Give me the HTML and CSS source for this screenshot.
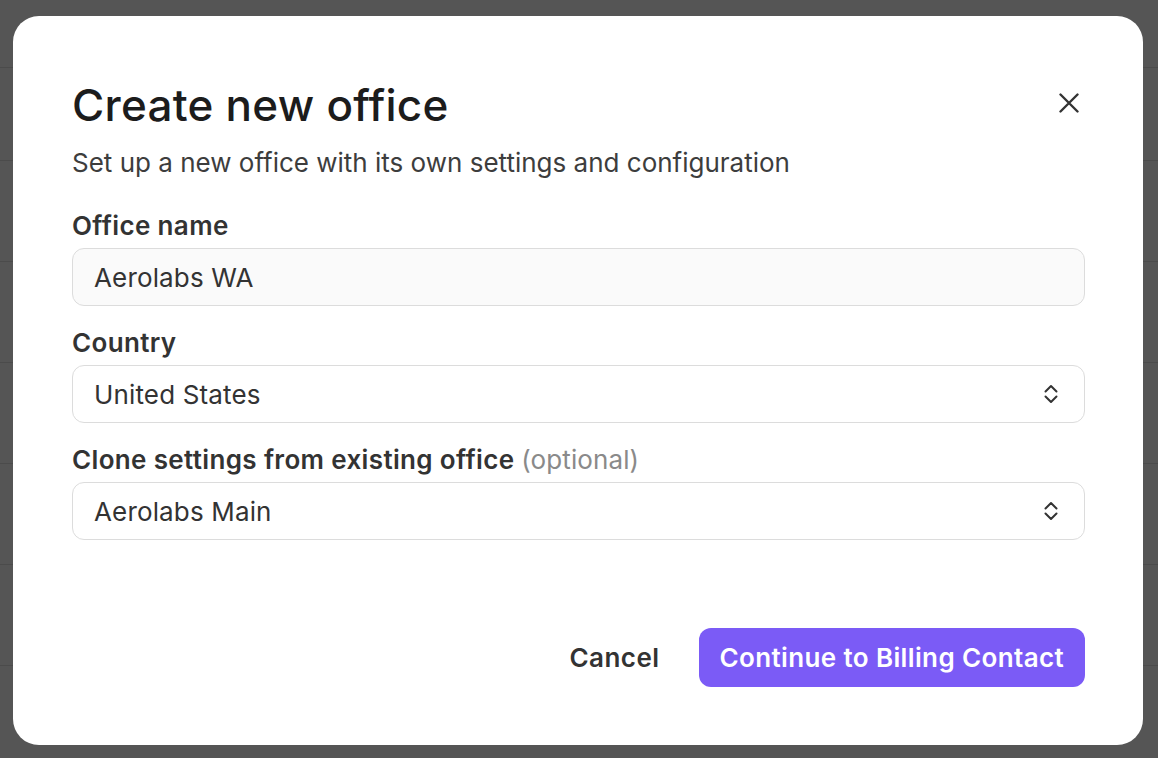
FILE: index.html
```html
<!DOCTYPE html>
<html lang="en">
<head>
<meta charset="utf-8">
<title>Create new office</title>
<link rel="stylesheet" href="styles.css">
</head>
<body>
<div class="backdrop">
  <div class="row r1"></div>
  <div class="row r2"></div>
  <div class="row"></div>
  <div class="row"></div>
  <div class="row"></div>
  <div class="row"></div>
  <div class="row"></div>
</div>
<div class="modal" role="dialog" aria-labelledby="title">
  <div class="header">
    <h1 id="title" class="title">Create new office</h1>
    <button class="close" aria-label="Close">
      <svg width="20" height="20" viewBox="0 0 20 20" fill="none" stroke="#333" stroke-width="2.4" stroke-linecap="round">
        <path d="M1.5 1.5 L18.5 18.5 M18.5 1.5 L1.5 18.5"/>
      </svg>
    </button>
  </div>
  <p class="subtitle">Set up a new office with its own settings and configuration</p>

  <div class="fields">
    <div class="field">
      <label class="label">Office name</label>
      <div class="input filled">Aerolabs WA</div>
    </div>
    <div class="field">
      <label class="label">Country</label>
      <div class="input select">
        <span>United States</span>
        <svg class="chev" width="14" height="20" viewBox="0 0 14 20" fill="none" stroke="#333" stroke-width="2" stroke-linecap="round" stroke-linejoin="round">
          <path d="M1.5 7.5 L7 2 L12.5 7.5 M1.5 12.5 L7 18 L12.5 12.5"/>
        </svg>
      </div>
    </div>
    <div class="field">
      <label class="label">Clone settings from existing office <span class="opt">(optional)</span></label>
      <div class="input select">
        <span>Aerolabs Main</span>
        <svg class="chev" width="14" height="20" viewBox="0 0 14 20" fill="none" stroke="#333" stroke-width="2" stroke-linecap="round" stroke-linejoin="round">
          <path d="M1.5 7.5 L7 2 L12.5 7.5 M1.5 12.5 L7 18 L12.5 12.5"/>
        </svg>
      </div>
    </div>
  </div>

  <div class="actions">
    <button class="btn-cancel">Cancel</button>
    <button class="btn-primary">Continue to Billing Contact</button>
  </div>
</div>
</body>
</html>
```
FILE: styles.css
```css
* { box-sizing: border-box; }
html, body {
  margin: 0;
  padding: 0;
  width: 1158px;
  height: 758px;
  overflow: hidden;
  background: #555555;
  font-family: Inter, "Noto Sans", "Liberation Sans", sans-serif;
}
.backdrop {
  display: flex;
  flex-direction: column;
}
.row {
  height: 101px;
  border-bottom: 1px solid #4b4b4b;
  flex-shrink: 0;
}
.r1 { height: 68px; }
.r2 { height: 93px; }

.modal {
  position: absolute;
  left: 13px;
  top: 16px;
  width: 1130px;
  height: 729px;
  background: #ffffff;
  border-radius: 26px;
  padding: 63px 58px 58px 59px;
  display: flex;
  flex-direction: column;
}
.header {
  display: flex;
  justify-content: space-between;
  align-items: center;
}
.title {
  margin: 0;
  font-size: 44px;
  line-height: 52px;
  font-weight: 500;
  color: #1c1c1c;
  letter-spacing: 0.25px;
}
.close {
  border: 0;
  background: none;
  padding: 0;
  margin-right: 6px;
  margin-top: -4px;
  width: 20px;
  height: 20px;
  display: flex;
  cursor: pointer;
}
.subtitle {
  margin: 16px 0 0 0;
  font-size: 26px;
  line-height: 32px;
  color: #3d3d3d;
  letter-spacing: 0;
}
.fields {
  margin-top: 31px;
  display: flex;
  flex-direction: column;
  gap: 21px;
}
.field {
  display: flex;
  flex-direction: column;
  gap: 6px;
}
.label {
  font-size: 26px;
  line-height: 32px;
  font-weight: 600;
  color: #333333;
  letter-spacing: 0.35px;
}
.opt {
  font-weight: 400;
  color: #8a8a8a;
  letter-spacing: 0.1px;
}
.input {
  height: 58px;
  border: 1px solid #dcdcdc;
  border-radius: 12px;
  background: #ffffff;
  padding: 2px 26px 0 21px;
  display: flex;
  align-items: center;
  font-size: 26px;
  line-height: 32px;
  color: #333333;
  letter-spacing: 0.15px;
}
.input.filled {
  background: #fafafa;
}
.select {
  justify-content: space-between;
}
.chev { display: block; margin-top: -2px; }

.actions {
  margin-top: auto;
  display: flex;
  justify-content: flex-end;
  align-items: center;
  gap: 39px;
}
.btn-cancel {
  border: 0;
  background: none;
  padding: 0;
  font-family: inherit;
  font-size: 26px;
  line-height: 32px;
  font-weight: 600;
  color: #333333;
  letter-spacing: 0.45px;
  cursor: pointer;
}
.btn-primary {
  border: 0;
  height: 59px;
  padding: 0 21px;
  border-radius: 12px;
  background: #7b5bf6;
  color: #ffffff;
  font-family: inherit;
  font-size: 26px;
  line-height: 32px;
  font-weight: 600;
  letter-spacing: 0.37px;
  cursor: pointer;
}
```
